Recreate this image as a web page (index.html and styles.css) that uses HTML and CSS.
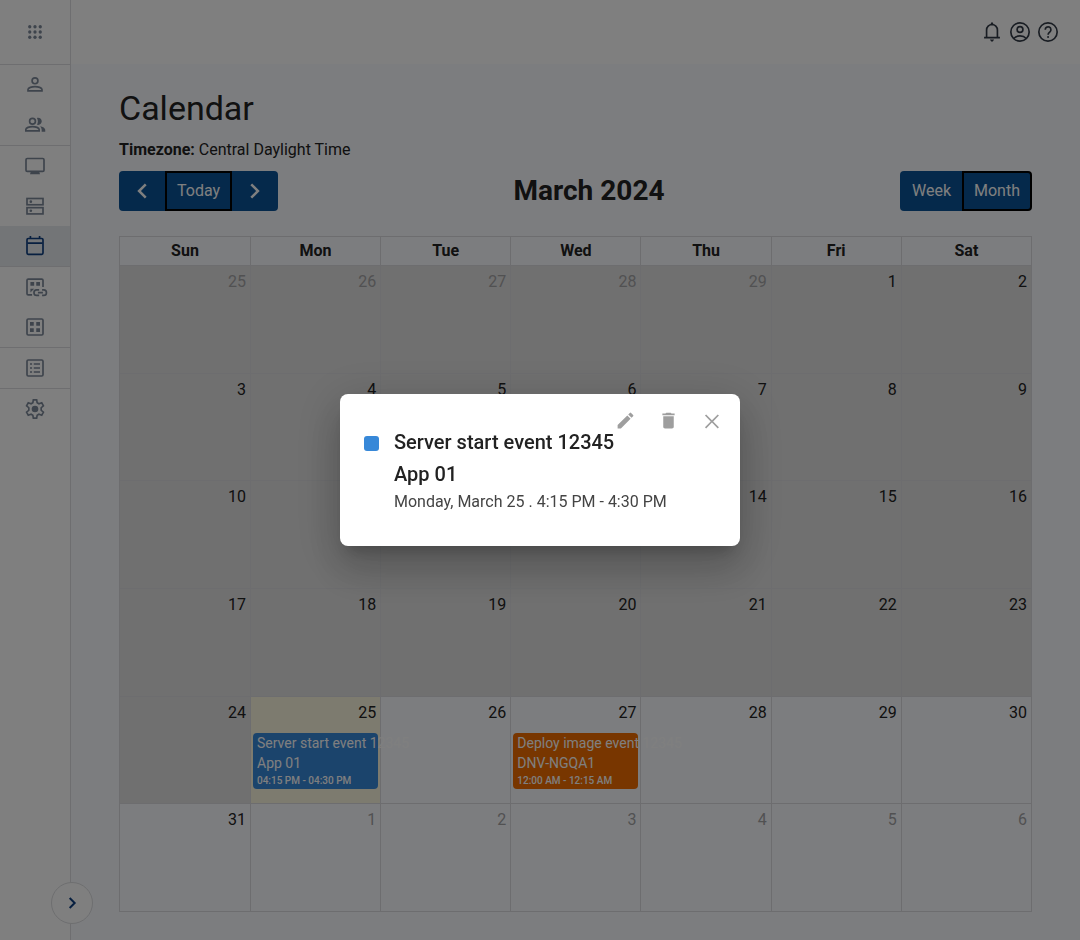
FILE: index.html
```html
<!DOCTYPE html>
<html lang="en">
<head>
    <meta charset="UTF-8">
    <meta name="viewport" content="width=device-width, initial-scale=1.0">
    <title>Calendar</title>
    <link rel="stylesheet" href="styles.css">
</head>
<body>

<div class="app">
    <nav class="sidebar" aria-label="Main">
        <button class="apps" aria-label="Apps">
            <svg class="icon" viewBox="0 0 24 24" fill="currentColor"><circle cx="5" cy="5" r="2.200"/><circle cx="12" cy="5" r="2.200"/><circle cx="19" cy="5" r="2.200"/><circle cx="5" cy="12" r="2.200"/><circle cx="12" cy="12" r="2.200"/><circle cx="19" cy="12" r="2.200"/><circle cx="5" cy="19" r="2.200"/><circle cx="12" cy="19" r="2.200"/><circle cx="19" cy="19" r="2.200"/></svg>
        </button>
        <div class="nav-group">
            <a href="#" aria-label="User"><svg class="icon" viewBox="0 0 24 24"><circle cx="12" cy="7" r="3.500"/><path d="M3.600 19v-1.500c0-2.200 4.600-3.600 8.400-3.600s8.400 1.400 8.400 3.600V19z"/></svg></a>
            <a href="#" aria-label="Groups"><svg class="icon" viewBox="0 0 24 24"><circle cx="9" cy="7.500" r="3.500"/><path d="M1 19v-1.500c0-2.200 4.200-3.600 8-3.600s8 1.400 8 3.600V19z"/><path class="fill" d="M14.300 3.500c3.500-.7 5.800 1.400 5.800 4.100s-2.300 4.900-5.800 4.100c1.500-2 1.600-5.800 0-8.200zM18 13.400c3.500.7 6.300 2.200 6.300 4.400V20h-4.300v-2.200c0-1.700-.7-3.300-2-4.400z"/></svg></a>
        </div>
        <div class="nav-group">
            <a href="#" aria-label="Desktops"><svg class="icon" viewBox="0 0 24 24"><rect x="1.200" y="3" width="21.600" height="15.500" rx="1.500"/><path class="fill" d="M7 18.500h10l1 3.500H6z"/></svg></a>
            <a href="#" aria-label="Servers"><svg class="icon" viewBox="0 0 24 24"><rect x="2.400" y="3" width="19.200" height="7.500"/><rect x="2.400" y="14" width="19.200" height="7.500"/><circle class="fill" cx="7" cy="6.800" r="1.600"/><circle class="fill" cx="7" cy="17.700" r="1.600"/></svg></a>
            <a href="#" class="active" aria-label="Calendar"><svg class="icon" viewBox="0 0 24 24"><rect x="2.400" y="3" width="19.200" height="19" rx="1.500"/><path d="M3 8.500h18M6.500 3.500V0M17.500 3.500V0"/></svg></a>
        </div>
        <div class="nav-group">
            <a href="#" aria-label="Linked apps"><svg class="icon" viewBox="0 0 24 24"><path d="M8.500 21.500H3.900a1.500 1.500 0 0 1-1.500-1.500V4a1.500 1.500 0 0 1 1.500-1.500h16.200a1.500 1.500 0 0 1 1.500 1.500v8"/><path class="fill" d="M6.500 6h4.500v4.500H6.500zM13.500 6H18v4.500h-4.500zM6.500 14H11l-4.500 4.500z"/><path d="M17 15.500h-3a3.200 3.200 0 0 0 0 6.500h3M20.500 15.500h2a3.200 3.200 0 0 1 0 6.500h-2M15.500 18.800h6"/></svg></a>
            <a href="#" aria-label="Applications"><svg class="icon" viewBox="0 0 24 24"><rect x="2.400" y="2.400" width="19.200" height="19.200" rx="1.500"/><path class="fill" d="M6 6h4.500v4.500H6zM13.500 6H18v4.500h-4.500zM6 13.500h4.500V18H6zM13.500 13.500H18V18h-4.500z"/></svg></a>
        </div>
        <div class="nav-group">
            <a href="#" aria-label="Logs"><svg class="icon" viewBox="0 0 24 24"><rect x="2.400" y="2.400" width="19.200" height="19.200" rx="1.500"/><path d="M6 7.200h2.500M10.500 7.200H18M6 12h2.500M10.500 12H18M6 16.800h2.500M10.500 16.800H18"/></svg></a>
        </div>
        <div class="nav-group last">
            <a href="#" aria-label="Settings"><svg class="icon" viewBox="0 0 24 24"><path d="M10 1h4l.6 3.600 2.100 1.200 3.400-1.200 2 3.500-2.700 2.400v3l2.700 2.400-2 3.500-3.400-1.200-2.100 1.200L14 23h-4l-.6-3.600-2.100-1.200-3.400 1.200-2-3.500 2.700-2.400v-3L1.900 8.100l2-3.500 3.400 1.200 2.100-1.200z"/><circle class="fill" cx="12" cy="12" r="4"/></svg></a>
        </div>
        <button class="expand" aria-label="Expand menu">
            <svg viewBox="0 0 24 24"><path d="M8.500 4.500l7.500 7.500-7.500 7.500"/></svg>
        </button>
    </nav>

    <div class="page">
        <header class="topbar">
            <button aria-label="Notifications"><svg viewBox="0 0 24 24"><path d="M5.500 18.500V9.500a6.500 6.500 0 0 1 13 0v9M2.500 18.800h19"/><path class="fill" d="M10 3.800l.9-3.300h2.200l.9 3.300zM9.500 21h5l-1.500 2.500h-2z"/></svg></button>
            <button aria-label="Account"><svg viewBox="0 0 24 24"><circle cx="12" cy="12" r="11"/><circle cx="12" cy="9" r="3.500"/><path d="M4.500 19.800c1.800-2 4.500-3.100 7.500-3.100s5.700 1.100 7.500 3.100"/></svg></button>
            <button aria-label="Help"><svg viewBox="0 0 24 24"><circle cx="12" cy="12" r="11"/><path d="M8.700 9.300a3.400 3.400 0 1 1 5.600 2.500c-1.300 1.100-2.200 1.700-2.200 3.400"/><circle class="fill" cx="12.100" cy="18" r="1.200"/></svg></button>
        </header>

        <main>
            <h1>Calendar</h1>
            <p class="timezone"><strong>Timezone:</strong> Central Daylight Time</p>

            <div class="toolbar">
                <div class="btn-group">
                    <button class="arrow" aria-label="Previous month"><svg viewBox="0 0 24 24"><path d="M16.500 4L8.500 12l8 8"/></svg></button>
                    <button class="pressed">Today</button>
                    <button class="arrow" aria-label="Next month"><svg viewBox="0 0 24 24"><path d="M7.500 4l8 8-8 8"/></svg></button>
                </div>
                <h2>March 2024</h2>
                <div class="btn-group right">
                    <button>Week</button>
                    <button class="pressed">Month</button>
                </div>
            </div>

            <table class="calendar">
                <thead>
                    <tr><th>Sun</th><th>Mon</th><th>Tue</th><th>Wed</th><th>Thu</th><th>Fri</th><th>Sat</th></tr>
                </thead>
                <tbody>
                    <tr class="past"><td class="other">25</td><td class="other">26</td><td class="other">27</td><td class="other">28</td><td class="other">29</td><td>1</td><td>2</td></tr>
                    <tr class="past"><td>3</td><td>4</td><td>5</td><td>6</td><td>7</td><td>8</td><td>9</td></tr>
                    <tr class="past"><td>10</td><td>11</td><td>12</td><td>13</td><td>14</td><td>15</td><td>16</td></tr>
                    <tr class="past"><td>17</td><td>18</td><td>19</td><td>20</td><td>21</td><td>22</td><td>23</td></tr>
                    <tr>
                        <td class="past-day">24</td>
                        <td class="today">25
                            <a href="#" class="event blue">
                                <span>Server start event 12345</span>
                                <span>App 01</span>
                                <small>04:15 PM - 04:30 PM</small>
                            </a>
                        </td>
                        <td>26</td>
                        <td>27
                            <a href="#" class="event orange">
                                <span>Deploy image event 12345</span>
                                <span>DNV-NGQA1</span>
                                <small>12:00 AM - 12:15 AM</small>
                            </a>
                        </td>
                        <td>28</td><td>29</td><td>30</td>
                    </tr>
                    <tr><td>31</td><td class="other">1</td><td class="other">2</td><td class="other">3</td><td class="other">4</td><td class="other">5</td><td class="other">6</td></tr>
                </tbody>
            </table>
        </main>
    </div>
</div>

<!-- event details -->
<div class="backdrop">
    <div class="dialog" role="dialog" aria-modal="true" aria-labelledby="event-title">
        <div class="actions">
            <button aria-label="Edit"><svg viewBox="0 0 24 24"><path d="M3 17.250V21h3.750L17.810 9.940l-3.750-3.750L3 17.250zM20.710 7.040a1 1 0 0 0 0-1.410l-2.340-2.340a1 1 0 0 0-1.410 0l-1.830 1.830 3.750 3.750 1.830-1.830z"/></svg></button>
            <button aria-label="Delete"><svg viewBox="0 0 24 24"><path d="M6 19c0 1.100.9 2 2 2h8c1.100 0 2-.9 2-2V7H6v12zM19 4h-3.500l-1-1h-5l-1 1H5v2h14V4z"/></svg></button>
            <button aria-label="Close"><svg viewBox="0 0 24 24"><path d="M20.500 6.410L19.090 5 12.500 11.590 5.910 5 4.500 6.410 11.090 13 4.500 19.590 5.910 21 12.500 14.410 19.090 21 20.500 19.590 13.910 13z"/></svg></button>
        </div>
        <div class="details">
            <span class="swatch"></span>
            <div>
                <h3 id="event-title">Server start event 12345</h3>
                <h3>App 01</h3>
                <p>Monday, March 25 . 4:15 PM - 4:30 PM</p>
            </div>
        </div>
    </div>
</div>

</body>
</html>
```
FILE: styles.css
```css
* {
    box-sizing: border-box;
}
body {
    margin: 0;
    font-family: Roboto, "Liberation Sans", sans-serif;
    font-size: 16px;
    line-height: 24px;
    color: #222;
    background: #f9fbff;
}
h1, h2, h3, p {
    margin: 0;
}
button {
    font: inherit;
    color: inherit;
    background: none;
    border: 0;
    padding: 0;
    cursor: pointer;
}
svg {
    display: block;
    fill: none;
    stroke: currentColor;
    stroke-width: 2;
    overflow: visible;
}
svg .fill {
    fill: currentColor;
    stroke: none;
}

.app {
    display: flex;
    min-height: 100vh;
}

/* sidebar */
.sidebar {
    position: relative;
    flex: none;
    display: flex;
    flex-direction: column;
    width: 71px;
    background: #fff;
    border-right: 1px solid #dcdde0;
    color: #7c8899;
}
.apps {
    display: flex;
    align-items: center;
    justify-content: center;
    height: 65px;
    border-bottom: 1px solid #dcdde0;
}
.icon {
    width: 20px;
    height: 20px;
}
.apps .icon {
    width: 18px;
    height: 18px;
    fill: currentColor;
    stroke: none;
}
.nav-group {
    border-bottom: 1px solid #dcdde0;
}
.nav-group.last {
    border-bottom: 0;
}
.nav-group a {
    display: flex;
    align-items: center;
    justify-content: center;
    height: 40px;
    color: inherit;
}
.nav-group a.active {
    background: #e6eaee;
    color: #0f3f80;
}
.expand {
    position: absolute;
    right: -23px;
    bottom: 16px;
    display: flex;
    align-items: center;
    justify-content: center;
    width: 42px;
    height: 42px;
    border: 1px solid #dcdde0;
    border-radius: 50%;
    background: #fff;
    color: #0f3f80;
}
.expand svg {
    width: 16px;
    height: 16px;
    stroke-width: 3;
}

/* page */
.page {
    flex: 1;
    min-width: 0;
}
.topbar {
    display: flex;
    align-items: center;
    justify-content: flex-end;
    gap: 8px;
    height: 64px;
    padding-right: 22px;
    background: #fff;
    color: #333b47;
}
.topbar svg {
    width: 20px;
    height: 20px;
}
main {
    padding: 24px 48px 28px;
}
h1 {
    font-size: 34px;
    font-weight: 400;
    line-height: 40px;
}
.timezone {
    margin: 10px 0 9px;
}
.timezone strong {
    font-weight: 700;
}

.toolbar {
    display: flex;
    align-items: center;
    justify-content: space-between;
    margin-bottom: 25px;
}
.toolbar h2 {
    font-size: 28px;
    font-weight: 700;
    line-height: 40px;
}
.btn-group {
    display: flex;
}
.btn-group button {
    height: 40px;
    padding: 0 12px;
    background: #0a5296;
    color: #fff;
}
.btn-group .arrow {
    padding: 0 13px;
}
.btn-group svg {
    width: 20px;
    height: 20px;
    stroke-width: 3;
}
.btn-group button:first-child {
    border-radius: 4px 0 0 4px;
}
.btn-group button:last-child {
    border-radius: 0 4px 4px 0;
}
.btn-group .pressed {
    border: 2px solid #000;
    padding: 0 10px;
}
.btn-group.right .pressed {
    margin-left: -1px;
}

/* month grid */
.calendar {
    width: 100%;
    height: 676px;
    table-layout: fixed;
    border-collapse: collapse;
}
.calendar th,
.calendar td {
    border: 1px solid #dadbde;
}
.calendar th {
    height: 29px;
    padding: 0;
    font-weight: 700;
}
.calendar th:first-child {
    width: 131px;
}
.calendar td {
    height: 107px;
    padding: 4px 4px 0 2px;
    text-align: right;
    vertical-align: top;
}
.calendar .past td,
.calendar .past-day {
    background: #e0e0e0;
}
.calendar .other {
    color: #a3a3a5;
}
.calendar .today {
    background: #fbf7df;
}
.event {
    display: block;
    height: 56px;
    margin: 8px -2px 0 0;
    padding: 0 4px;
    border-radius: 4px;
    color: #fff;
    text-align: left;
    text-decoration: none;
    white-space: nowrap;
    font-size: 14px;
    line-height: 20px;
}
.event span,
.event small {
    display: block;
}
.event small {
    font-size: 10px;
    font-weight: 500;
    line-height: 16px;
}
.event.blue {
    background: #3788d8;
}
.event.orange {
    background: #f06c00;
}

/* dialog */
.backdrop {
    position: fixed;
    inset: 0;
    display: flex;
    align-items: center;
    justify-content: center;
    background: rgba(0, 0, 0, 0.5);
}
.dialog {
    width: 400px;
    max-width: 90%;
    padding: 16px 18px 32px 24px;
    border-radius: 8px;
    background: #fff;
    box-shadow: 0 11px 15px -7px rgba(0, 0, 0, 0.2), 0 24px 38px 3px rgba(0, 0, 0, 0.14), 0 9px 46px 8px rgba(0, 0, 0, 0.12);
}
.actions {
    display: flex;
    justify-content: flex-end;
    gap: 22px;
    height: 16px;
    color: #9e9e9e;
}
.actions svg {
    width: 21px;
    height: 21px;
    fill: currentColor;
    stroke: none;
}
.details {
    display: flex;
    gap: 15px;
}
.swatch {
    flex: none;
    width: 15px;
    height: 15px;
    margin-top: 10px;
    border-radius: 3px;
    background: #3788d8;
}
.details h3 {
    font-size: 20px;
    font-weight: 500;
    line-height: 32px;
}
.details p {
    color: #444;
}
```
